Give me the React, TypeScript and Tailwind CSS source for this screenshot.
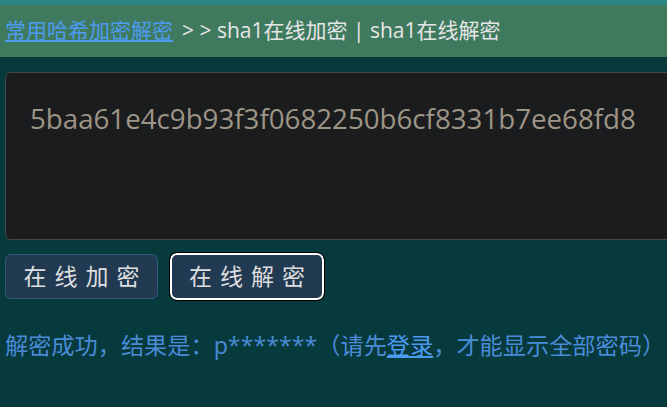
import React from "react";

export default function App() {
  const cjk = { fontFamily: '"Open Sans", "Noto Sans CJK SC", sans-serif' };
  return (
    <div className="min-h-screen w-[667px] overflow-hidden bg-[#063a3c]" style={cjk}>
      <div className="h-[5px] bg-[#2e8383]" />
      <div className="flex h-[52px] items-center whitespace-nowrap bg-[#3f7a5f] px-[5px] text-[21px] text-[#e6e6e6]">
        <a href="#" className="text-[#4d9bf0] underline underline-offset-2">常用哈希加密解密</a>
        <span className="ml-[9px]">&gt; &gt; sha1在线加密 | sha1在线解密</span>
      </div>
      <div className="pl-[5px] pt-[15px]">
        <div className="h-[168px] w-[700px] rounded-[6px] border border-[#474747] bg-[#1b1c1e] pl-[24px] pt-[27px] text-[27.7px] leading-[36px] text-[#9d9586]">
          5baa61e4c9b93f3f0682250b6cf8331b7ee68fd8
        </div>
        <div className="mt-[13px] flex items-center gap-[12px]">
          <button className="flex h-[45px] w-[153px] items-center justify-center rounded-[6px] border border-[#2f5a7e] bg-[#213a52] text-[23px] tracking-[8px] text-[#dedede]">
            <span className="ml-[8px]">在线加密</span>
          </button>
          <button className="flex h-[47px] w-[154px] items-center justify-center rounded-[7px] border-2 border-white bg-[#213a52] text-[23px] tracking-[8px] text-[#dedede] outline outline-1 outline-black">
            <span className="ml-[8px]">在线解密</span>
          </button>
        </div>
        <div className="mt-[28px] whitespace-nowrap text-[23.2px] text-[#4a8bd8]">
          解密成功，结果是：p*******（请先<a href="#" className="text-[#4d9bf0] underline underline-offset-2">登录</a>，才能显示全部密码）
        </div>
      </div>
    </div>
  );
}
